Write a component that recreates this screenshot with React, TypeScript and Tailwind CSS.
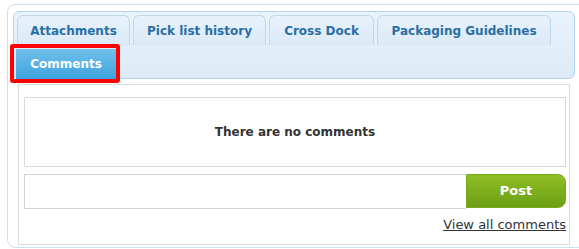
const tabs = [
  { label: 'Attachments', w: 'w-[113px]' },
  { label: 'Pick list history', w: 'w-[133px]' },
  { label: 'Cross Dock', w: 'w-[105px]' },
  { label: 'Packaging Guidelines', w: 'w-[174px]' },
];

function Tab({ label, w }: { label: string; w: string }) {
  return (
    <li
      className={`${w} flex h-[30px] items-center justify-center rounded-t-[6px] border border-b-0 border-[#bcd7ee] bg-gradient-to-b from-[#e8f2fb] to-[#dbeaf7] text-[12px] font-bold text-[#2a6ea3]`}
    >
      {label}
    </li>
  );
}

export default function App() {
  return (
    <div
      className="h-[249px] w-[579px] overflow-hidden bg-white"
      style={{ fontFamily: '"DejaVu Sans", Verdana, sans-serif' }}
    >
      <div className="ml-[7px] mt-[4px] h-[244px] w-[590px] rounded-[8px] border border-[#cfe0f2] pl-[5px] pt-[6px]">
        {/* tab strip */}
        <div className="h-[68px] w-[562px] rounded-[6px] border border-[#b5d3ee] bg-gradient-to-b from-[#eaf3fc] to-[#dceaf7] pl-[3px] pt-[3px]">
          <ul className="flex gap-[3px]">
            {tabs.map((t) => (
              <Tab key={t.label} label={t.label} w={t.w} />
            ))}
          </ul>
          <div className="relative ml-[-1px] mt-[4px] w-[100px]">
            <div className="flex h-[30px] items-center justify-center bg-gradient-to-b from-[#72c0ea] to-[#3aa3de] text-[12px] font-bold text-white">
              Comments
            </div>
            <div className="absolute -bottom-[4px] -left-[6px] -right-[4px] -top-[5px] rounded-[3px] border-[4px] border-[#ff0000]" />
          </div>
        </div>

        {/* content */}
        <div className="ml-[5px] mt-[5px] h-[161px] w-[552px] border border-[#dcdcdc] pl-[5px] pr-[3px] pt-[12px]">
          <div className="flex h-[70px] items-center justify-center border border-[#d8d8d8] text-[12px] font-bold text-[#333333]">
            There are no comments
          </div>
          <div className="mt-[7px] flex h-[35px]">
            <input
              className="h-full flex-1 border border-r-0 border-[#d4d4d4] bg-white px-2 text-[12px] outline-none"
              aria-label="Comment"
            />
            <button
              type="button"
              className="h-[34px] w-[100px] rounded-r-[8px] border border-[#7aa81c] bg-gradient-to-b from-[#8fbe24] to-[#6b9f15] text-[13px] font-bold text-white"
            >
              Post
            </button>
          </div>
          <div className="mt-[6px] flex justify-end">
            <a href="#" className="text-[13px] text-[#333333] underline">
              View all comments
            </a>
          </div>
        </div>
      </div>
    </div>
  );
}
